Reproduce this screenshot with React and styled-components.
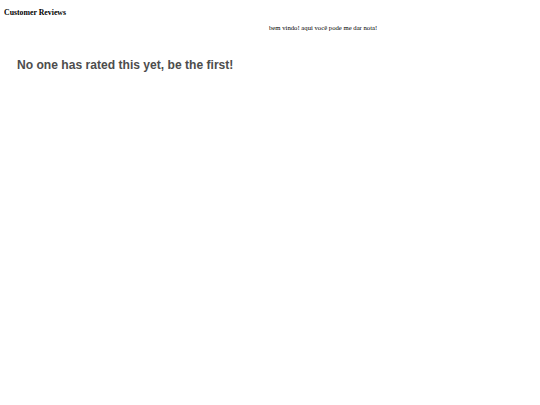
import React from 'react';
import styled, { createGlobalStyle } from 'styled-components';

const GlobalStyle = createGlobalStyle`
  body {
    margin: 4px;
    background: #ffffff;
    font-family: "Liberation Serif", "Times New Roman", serif;
    color: #000;
  }
`;

const Title = styled.h1`
  font-size: 7.8px;
  font-weight: bold;
  margin: 4px 0 7px;
`;

const Welcome = styled.p`
  font-size: 6.7px;
  margin: 0 0 0 calc(50% - 1px);
`;

const Empty = styled.h2`
  font-family: "Liberation Sans", Arial, sans-serif;
  font-size: 12.1px;
  font-weight: bold;
  color: #4d4d4d;
  margin: 27px 0 0 13px;
`;

export default function App() {
  return (
    <>
      <GlobalStyle />
      <Title>Customer Reviews</Title>
      <Welcome>bem vindo! aqui você pode me dar nota!</Welcome>
      <Empty>No one has rated this yet, be the first!</Empty>
    </>
  );
}
